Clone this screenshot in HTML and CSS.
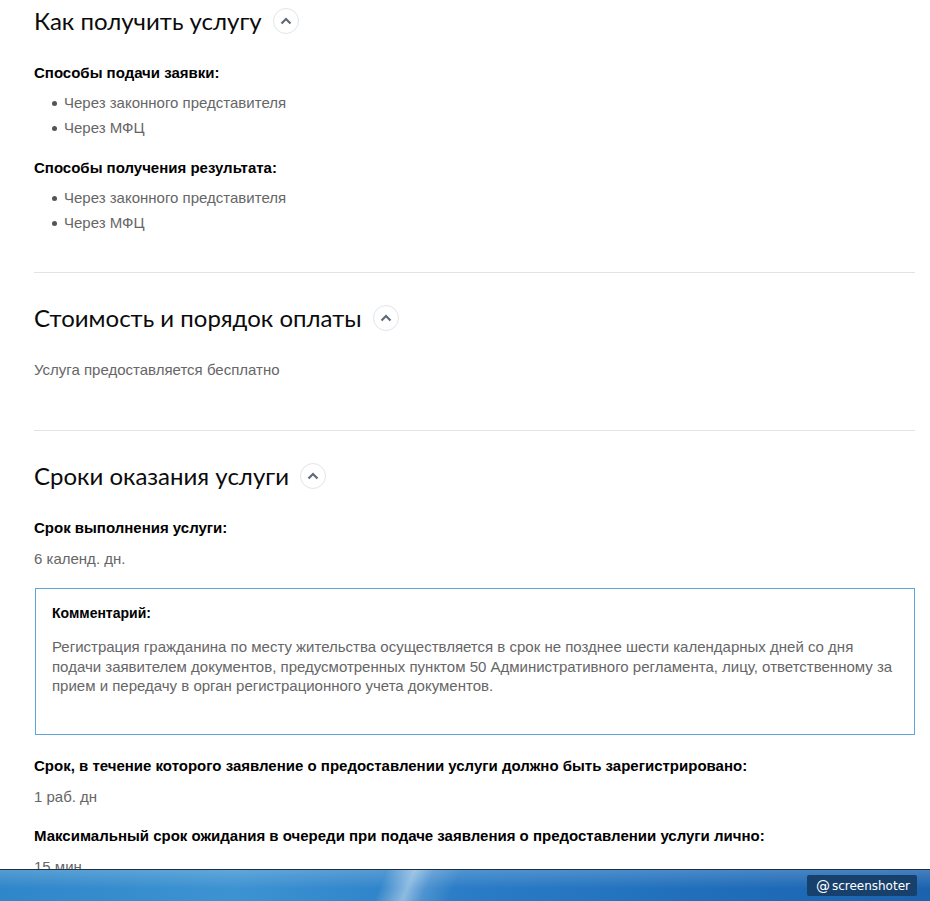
FILE: index.html
```html
<!DOCTYPE html>
<html lang="ru">
<head>
  <meta charset="UTF-8" />
  <meta name="viewport" content="width=device-width, initial-scale=1.0"/>
  <title>Как получить услугу</title>
  <link rel="stylesheet" href="styles.css">
</head>
<body>

  <div class="page">
    <section class="block block-first">
      <h2 class="block-title">Как получить услугу <span class="toggle"><svg width="12" height="8" viewBox="0 0 12 8"><path d="M1.5 6.5 L6 2 L10.5 6.5" fill="none" stroke="#5f6b78" stroke-width="2.2"/></svg></span></h2>

      <div class="label label-top">Способы подачи заявки:</div>
      <ul class="list">
        <li>Через законного представителя</li>
        <li>Через МФЦ</li>
      </ul>

      <div class="label label-next">Способы получения результата:</div>
      <ul class="list">
        <li>Через законного представителя</li>
        <li>Через МФЦ</li>
      </ul>
    </section>

    <section class="block block-price">
      <h2 class="block-title">Стоимость и порядок оплаты <span class="toggle"><svg width="12" height="8" viewBox="0 0 12 8"><path d="M1.5 6.5 L6 2 L10.5 6.5" fill="none" stroke="#5f6b78" stroke-width="2.2"/></svg></span></h2>
      <p class="value value-top">Услуга предоставляется бесплатно</p>
    </section>

    <section class="block block-terms">
      <h2 class="block-title">Сроки оказания услуги <span class="toggle"><svg width="12" height="8" viewBox="0 0 12 8"><path d="M1.5 6.5 L6 2 L10.5 6.5" fill="none" stroke="#5f6b78" stroke-width="2.2"/></svg></span></h2>

      <div class="label label-top">Срок выполнения услуги:</div>
      <p class="value">6 календ. дн.</p>

      <div class="comment">
        <div class="comment-label">Комментарий:</div>
        <p class="comment-text">Регистрация гражданина по месту жительства осуществляется в срок не позднее шести календарных дней со дня подачи заявителем документов, предусмотренных пунктом 50 Административного регламента, лицу, ответственному за прием и передачу в орган регистрационного учета документов.</p>
      </div>

      <div class="label label-after-box">Срок, в течение которого заявление о предоставлении услуги должно быть зарегистрировано:</div>
      <p class="value">1 раб. дн</p>

      <div class="label label-term">Максимальный срок ожидания в очереди при подаче заявления о предоставлении услуги лично:</div>
      <p class="value">15 мин</p>
    </section>
  </div>

  <div class="taskbar">
    <div class="shot-badge"><span class="at">@</span>screenshoter</div>
  </div>

</body>
</html>
```

FILE: styles.css
```css
* {
  box-sizing: border-box;
}

body {
  margin: 0;
  padding: 0;
  background: #fff;
  font-family: 'Liberation Sans', Arial, sans-serif;
  font-size: 15px;
  color: #666;
  overflow: hidden;
}

.page {
  padding: 4px 15px 0 34px;
}

.block {
  border-bottom: 1px solid #e3e3e3;
}

.block-first {
  padding-bottom: 37px;
}

.block-price {
  padding-top: 28px;
  padding-bottom: 50px;
}

.block-terms {
  padding-top: 28px;
  border-bottom: none;
}

.block-title {
  margin: 0;
  display: flex;
  align-items: center;
  height: 32px;
  font-family: Lato, 'Open Sans', sans-serif;
  font-weight: 400;
  font-size: 24px;
  color: #0b0b0b;
}

.toggle {
  display: inline-flex;
  align-items: center;
  justify-content: center;
  width: 26px;
  height: 26px;
  margin-left: 11px;
  margin-top: 1px;
  border: 1px solid #dfe5eb;
  border-radius: 50%;
}

.label {
  font-weight: 700;
  color: #000;
  line-height: 20px;
}

.label-top {
  margin-top: 27px;
}

.label-next {
  margin-top: 18px;
}

.label-after-box {
  margin-top: 21px;
}

.label-term {
  margin-top: 19px;
}

.list {
  margin: 7px 0 0;
  padding-left: 30px;
  list-style: none;
}

.list li {
  position: relative;
  line-height: 25px;
}

.list li::before {
  content: '';
  position: absolute;
  left: -12px;
  top: 11px;
  width: 5px;
  height: 5px;
  border-radius: 50%;
  background: #555;
}

.value {
  margin: 11px 0 0;
  line-height: 20px;
}

.value-top {
  margin-top: 27px;
}

.comment {
  margin: 19px 0 0 1px;
  padding: 14px 16px 38px;
  border: 1px solid #5fa6d6;
}

.comment-label {
  font-size: 14px;
  font-weight: 700;
  color: #000;
  line-height: 20px;
}

.comment-text {
  margin: 14px 0 0;
  line-height: 19.5px;
}

.taskbar {
  position: fixed;
  left: 0;
  right: 0;
  bottom: 0;
  height: 32px;
  border-top: 1px solid #1f2f40;
  background:
    linear-gradient(112deg, transparent 41%, rgba(255,255,255,0.45) 44%, rgba(255,255,255,0.15) 46%, transparent 49%),
    linear-gradient(180deg, rgba(255,255,255,0.18), rgba(255,255,255,0) 60%),
    linear-gradient(90deg, #2f86c9 0%, #3d93d2 25%, #2a7cc6 50%, #1f6cb9 80%, #1b63ae 100%);
  display: flex;
  justify-content: flex-end;
  align-items: center;
  padding-right: 13px;
}

.shot-badge {
  display: flex;
  align-items: center;
  height: 21px;
  padding: 0 7px 0 9px;
  background: #17406d;
  border-radius: 2px;
  color: #fff;
  font-family: 'DejaVu Sans', sans-serif;
  font-size: 12px;
}

.at {
  font-size: 14px;
  margin-right: 2px;
}
```
